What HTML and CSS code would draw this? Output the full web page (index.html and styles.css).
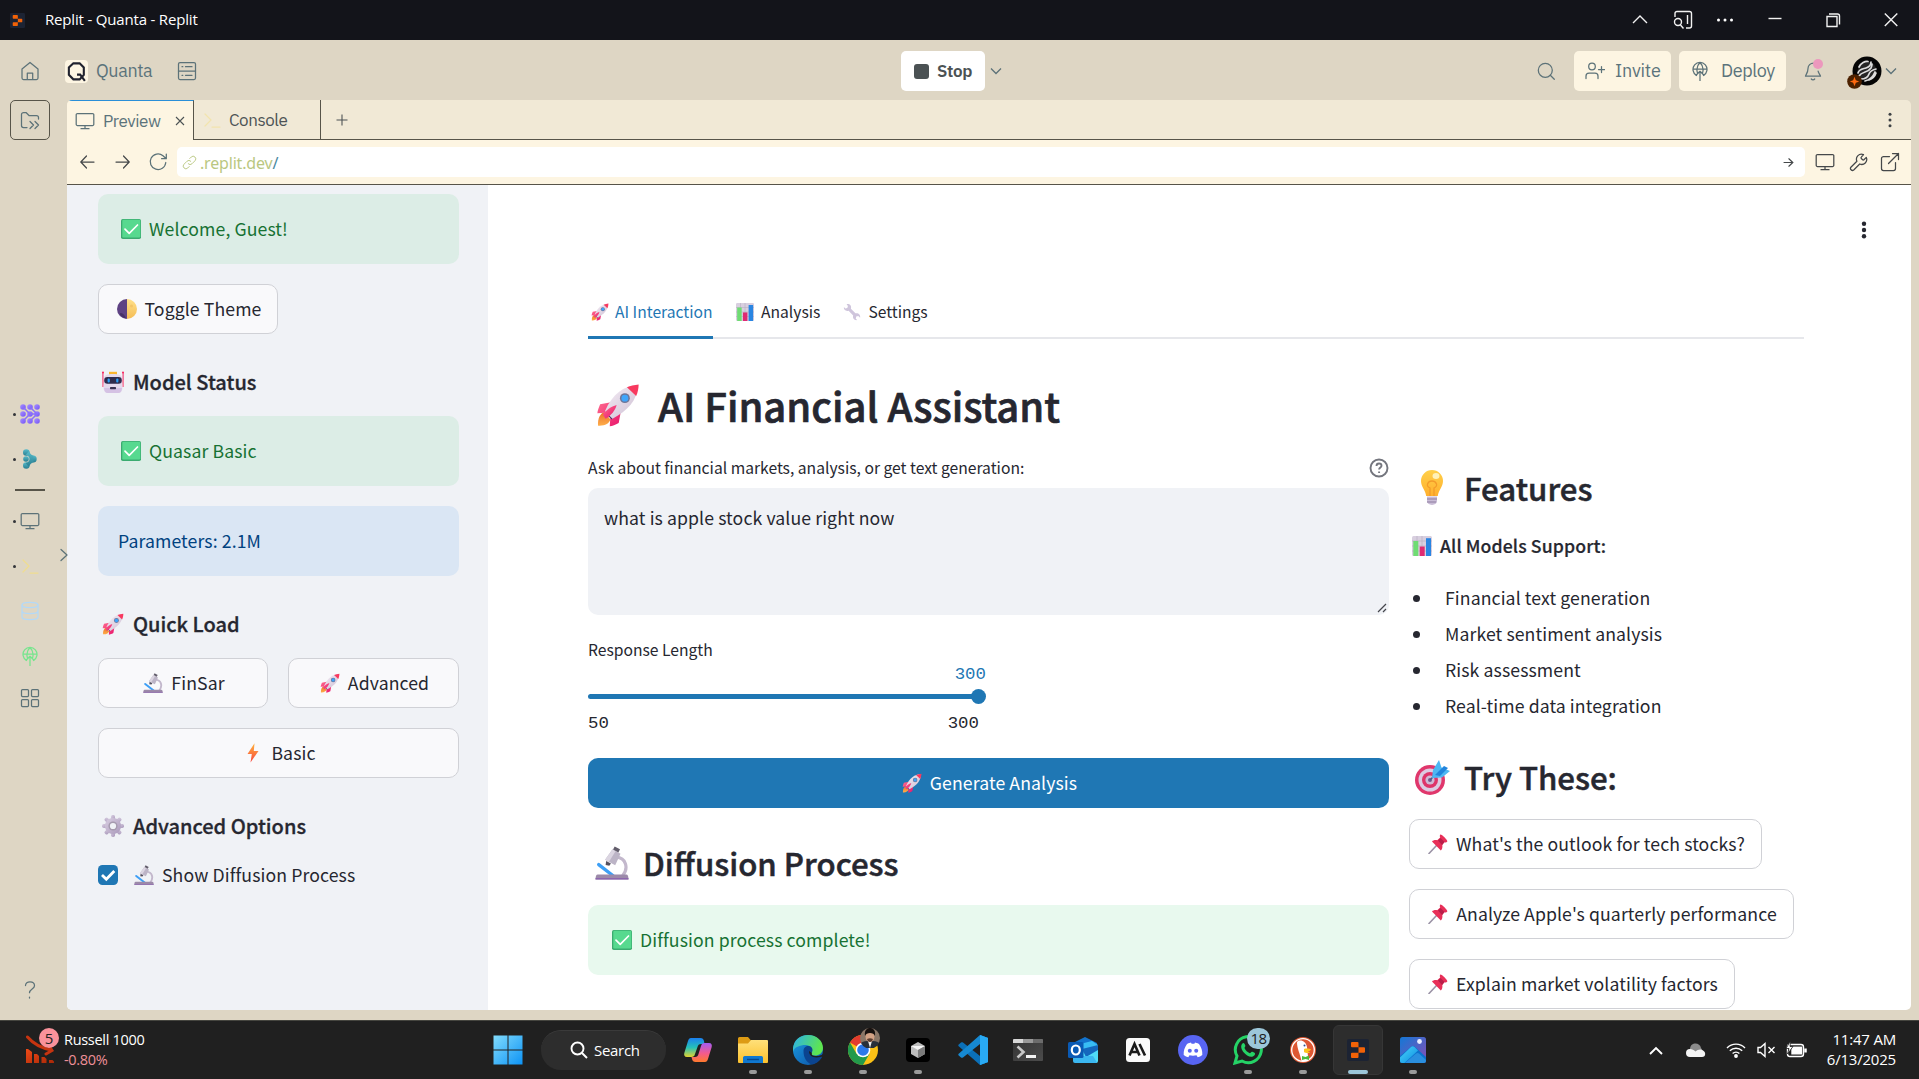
FILE: index.html
```html
<!DOCTYPE html>
<html lang="en">
<head>
<meta charset="utf-8">
<title>Replit - Quanta - Replit</title>
<link rel="stylesheet" href="styles.css">
</head>
<body>
<svg class="sprite" aria-hidden="true">
  <defs>
    <linearGradient id="gBody" x1="0" y1="0" x2="1" y2="1"><stop offset="0" stop-color="#f6eef6"/><stop offset="1" stop-color="#cdbfd3"/></linearGradient>
    <linearGradient id="gFin" x1="0" y1="0" x2="1" y2="1"><stop offset="0" stop-color="#ff6a8e"/><stop offset="1" stop-color="#e8156b"/></linearGradient>
    <linearGradient id="gFire" x1="0" y1="0" x2="0" y2="1"><stop offset="0" stop-color="#e8702a"/><stop offset="1" stop-color="#ffae4a"/></linearGradient>
    <linearGradient id="gBolt" x1="0" y1="0" x2="0" y2="1"><stop offset="0" stop-color="#ffb43c"/><stop offset="1" stop-color="#f7453f"/></linearGradient>
    <linearGradient id="gGear" x1="0" y1="0" x2="1" y2="1"><stop offset="0" stop-color="#d9cfe2"/><stop offset="1" stop-color="#a998ba"/></linearGradient>
    <linearGradient id="gMoon" x1="0" y1="0" x2="0" y2="1"><stop offset="0" stop-color="#ffe08a"/><stop offset="1" stop-color="#f5bd55"/></linearGradient>
    <linearGradient id="gBulb" x1="0" y1="0" x2="0" y2="1"><stop offset="0" stop-color="#ffd04a"/><stop offset="1" stop-color="#ffb02e"/></linearGradient>
    <linearGradient id="gPurple" x1="0" y1="0" x2="1" y2="1"><stop offset="0" stop-color="#a892ff"/><stop offset="1" stop-color="#7352f5"/></linearGradient>
    <linearGradient id="gTeal" x1="0" y1="0" x2="0" y2="1"><stop offset="0" stop-color="#58bccb"/><stop offset="1" stop-color="#287d90"/></linearGradient>
    <linearGradient id="gWin" x1="0" y1="0" x2="1" y2="1"><stop offset="0" stop-color="#82dcfc"/><stop offset="1" stop-color="#0d93f5"/></linearGradient>
    <linearGradient id="gCopA" x1="0" y1="0" x2="0" y2="1"><stop offset="0" stop-color="#1b7ff0"/><stop offset=".5" stop-color="#25c1b8"/><stop offset="1" stop-color="#e4d32e"/></linearGradient>
    <linearGradient id="gCopB" x1="0" y1="0" x2="0" y2="1"><stop offset="0" stop-color="#a35cf2"/><stop offset=".55" stop-color="#f45b8c"/><stop offset="1" stop-color="#ff7a2c"/></linearGradient>
    <linearGradient id="gFold" x1="0" y1="0" x2="0" y2="1"><stop offset="0" stop-color="#ffe07a"/><stop offset="1" stop-color="#fcc12d"/></linearGradient>
    <linearGradient id="gEdgeA" x1="0" y1="0" x2="1" y2=".3"><stop offset="0" stop-color="#2bb1ec"/><stop offset="1" stop-color="#5ee64f"/></linearGradient>
    <linearGradient id="gEdgeB" x1="0" y1="0" x2="1" y2="1"><stop offset="0" stop-color="#1b9de2"/><stop offset="1" stop-color="#0c50a4"/></linearGradient>
    <linearGradient id="gTerm" x1="0" y1="0" x2="1" y2="1"><stop offset="0" stop-color="#333"/><stop offset="1" stop-color="#4c4c4c"/></linearGradient>
    <linearGradient id="gPhoto" x1="0" y1="0" x2="1" y2="1"><stop offset="0" stop-color="#1378d6"/><stop offset="1" stop-color="#8a4db4"/></linearGradient>
    <linearGradient id="gHill" x1="0" y1="0" x2="1" y2="1"><stop offset="0" stop-color="#4ad4fa"/><stop offset="1" stop-color="#0b8ce0"/></linearGradient>
    <linearGradient id="gTrend" x1="0" y1="0" x2="1" y2="1"><stop offset="0" stop-color="#ef4a17"/><stop offset="1" stop-color="#a92807"/></linearGradient>
  </defs>

  <symbol id="rocket" viewBox="0 0 32 32">
    <path d="M6 21c-3 1-5 5-4.500 10 5 .3 8-1.500 9-4.500z" fill="url(#gFire)"/>
    <path d="M11 14l-8 1.500c-1 2.500-1.800 4.500-2 6.500l8-.5zM18 21l-1.500 8c-2.500 1.500-4.500 2-6.500 2.500l.5-8z" fill="url(#gFin)"/>
    <path d="M9 20l4 4-1.500 2.500-5-4.500z" fill="#433b6b"/>
    <path d="M30.500 1.500C20 2 12 8 6.500 20.500L12 26C23 20 30 13 30.500 1.500z" fill="url(#gBody)"/>
    <path d="M22.500 3c2.500-1 5.500-1.700 8.500-2 0 3-.7 6-1.800 8.500z" fill="#f8395f"/>
    <circle cx="21" cy="11" r="3.600" fill="#6d7598"/><circle cx="21" cy="11" r="2.500" fill="#3fa5fb"/>
    <path d="M5 23c2-3 6-6 10-7-1 4-4 7.500-8 10z" fill="url(#gFin)"/>
  </symbol>
  <symbol id="check" viewBox="0 0 20 20">
    <rect width="20" height="20" rx="1.800" fill="#3bab70"/><rect x="1.300" y=".8" width="18" height="17.600" rx="1.200" fill="#57d98f"/>
    <path d="M4 10.200l4.200 4.200L16.500 6" fill="none" stroke="#fff" stroke-width="1.700" stroke-linecap="round" stroke-linejoin="round"/>
  </symbol>
  <symbol id="moon" viewBox="0 0 20 20">
    <path d="M10 0a10 10 0 000 20z" fill="#5e4283"/><path d="M10 0a10 10 0 010 20z" fill="url(#gMoon)"/>
    <path d="M3 14c3 0 5 2 6 5.600-2.500-.6-4.600-2-6-4z" fill="#463066"/><circle cx="14.500" cy="7" r="1.500" fill="#f3c567"/>
  </symbol>
  <symbol id="robot" viewBox="0 0 22 22">
    <path d="M.9 1v15M21.100 1v15" stroke="#f0467c" stroke-width="1.200"/><path d="M.2 9h3v7h-3zM18.800 9h3v7h-3z" fill="#f58aa6"/>
    <circle cx="1" cy="1.500" r="1" fill="#f8265f"/><circle cx="21" cy="1.500" r="1" fill="#f8265f"/>
    <path d="M7 .8h8V5H7z" fill="#fbb62f"/>
    <path d="M2.200 7c0-3 3-4 8.800-4s8.800 1 8.800 4l.7 9c0 4-1.500 6-4 6H5.500c-2.500 0-4-2-4-6z" fill="#e4d9ec"/>
    <path d="M2 17h18c-.2 3-1.500 5-4 5H6c-2.500 0-3.800-2-4-5z" fill="#d5c2e4"/>
    <rect x="2.200" y="6" width="17.600" height="6.800" rx="3.200" fill="#2e2b4c"/>
    <rect x="5.600" y="7.400" width="2.200" height="4" rx="1" fill="#2b9df4"/><rect x="14.200" y="7.400" width="2.200" height="4" rx="1" fill="#2b9df4"/>
    <rect x="8" y="16" width="6" height="2.200" rx=".6" fill="#3b3352"/>
  </symbol>
  <symbol id="scope" viewBox="0 0 32 32">
    <path d="M20 10.500c9 .5 12 10 6 17.500" fill="none" stroke="#c3b8cc" stroke-width="3"/>
    <path d="M3.500 17.500L17 28" stroke="#3d9ff6" stroke-width="3.200" stroke-linecap="round"/>
    <path d="M16.500 3l7.500 4.300-5 10.700-9.500-5z" fill="#bcb4c6"/><path d="M16.500 3l3 1.600L13 15l-3.500-2z" fill="#dbd5e1"/>
    <path d="M18.500.5l5 2.500-1.500 3-5-2.800z" fill="#625d6b"/><path d="M10.500 14l4.500 2.500-1.500 2-3.500-.7z" fill="#55505f"/>
    <path d="M2.500 26.800h27c1.300 0 2 1.500 2 4.700H.5c0-3.200.7-4.700 2-4.700z" fill="#9c8aa9"/><path d="M.5 30.200h31v1.300H.5z" fill="#8c66ad"/>
  </symbol>
  <symbol id="bolt" viewBox="0 0 20 20"><path d="M11.500.3L4.500 11h4.300L7.500 19.500 15.500 8h-4.700z" fill="url(#gBolt)"/></symbol>
  <symbol id="gear" viewBox="0 0 24 24">
    <g fill="url(#gGear)"><rect x="9.800" y="0" width="4.400" height="7" rx="1.800"/><rect x="9.800" y="17" width="4.400" height="7" rx="1.800"/><rect x="0" y="9.800" width="7" height="4.400" rx="1.800"/><rect x="17" y="9.800" width="7" height="4.400" rx="1.800"/><g transform="rotate(45 12 12)"><rect x="9.800" y="0" width="4.400" height="7" rx="1.800"/><rect x="9.800" y="17" width="4.400" height="7" rx="1.800"/><rect x="0" y="9.800" width="7" height="4.400" rx="1.800"/><rect x="17" y="9.800" width="7" height="4.400" rx="1.800"/></g><circle cx="12" cy="12" r="8.800"/></g>
    <circle cx="12" cy="12" r="5" fill="#a59aae"/><circle cx="12" cy="12" r="3.400" fill="#f0f2f6"/>
  </symbol>
  <symbol id="chart" viewBox="0 0 20 20">
    <rect width="20" height="20" rx="1.500" fill="#d8cfdf"/><path d="M0 5h20M0 10h20M0 15h20M5 0v20M10 0v20" stroke="#b5abc1" stroke-width=".6"/>
    <path d="M1.300 5h5v15h-5z" fill="#6fdc73"/><path d="M7.700 10.500h5V20h-5z" fill="#de2a72"/><path d="M14 2.200h5V20h-5z" fill="#2985e2"/>
  </symbol>
  <symbol id="spanner" viewBox="0 0 20 20"><path d="M1 4.500L2.500 6l2.300-.5.700-2.300L4 1.300c3-1 5.800 1.500 4.800 5l5 5.200c3-1 6 1.500 5.200 5L17 14.500l-2.300.6-.5 2.300 1.600 1.600c-3 .8-5.500-1.800-4.500-5L6.200 8.600C3 9.500.4 7.300 1 4.500z" fill="#cfc5dc"/></symbol>
  <symbol id="bulb" viewBox="0 0 22 35">
    <path d="M11 0a11 11 0 00-11 11c0 6 4.500 9 5.200 15h11.600C17.500 20 22 17 22 11A11 11 0 0011 0z" fill="url(#gBulb)"/>
    <path d="M9 26V18c-5-2-2-7 2-7s7 5 2 7v8" fill="none" stroke="#f39b2a" stroke-width="1.300"/><ellipse cx="15" cy="6" rx="3.500" ry="3" fill="#fff1b8"/>
    <path d="M6 26.500h10v5c0 2-2 3-5 3.500-3-.5-5-1.500-5-3.500z" fill="#c9bcd6"/><path d="M6 29h10M6 32h9" stroke="#8d7ca0" stroke-width="1"/>
  </symbol>
  <symbol id="target" viewBox="0 0 35 35">
    <circle cx="15" cy="20" r="15" fill="#e0376c"/><circle cx="15" cy="20" r="11.500" fill="#dccbe2"/><circle cx="15" cy="20" r="8" fill="#de3469"/><circle cx="15" cy="20" r="4.600" fill="#cdb9d5"/><circle cx="15" cy="20" r="2" fill="#765c8b"/>
    <path d="M15 20l8-8" stroke="#4a5b8b" stroke-width="1.500"/><path d="M17 18l1-8 6-10 2.500 7.500L35 11l-8 6.500z" fill="#4db7f3"/><path d="M20 15L29 6l4 2-8 8z" fill="#2185dd"/>
  </symbol>
  <symbol id="pin" viewBox="0 0 20 20">
    <path d="M1 19.500l7.500-8" stroke="#9b93a6" stroke-width="1.600" stroke-linecap="round"/>
    <path d="M12.300.6c1-.8 7.700 5.700 7 7-.8 1.200-2.200 1-3 .7l-2 2.800c.4 2.500-.3 4.500-1.500 5.400L4 7.500c1-1.300 3.200-1.800 5.200-1.300l3-2.600c-.6-1.200-.5-2.300.1-3z" fill="#e82f58"/><path d="M12.500 4l4 4-2.500 3-4-4.500z" fill="#b91f4a"/>
  </symbol>
  <symbol id="monitor" viewBox="0 0 20 20"><path d="M2.500 2.500h15a1.300 1.300 0 011.300 1.300v9.400a1.300 1.300 0 01-1.300 1.300h-15a1.300 1.300 0 01-1.300-1.300V3.800a1.300 1.300 0 011.300-1.300zM10 14.500v3M6 17.700h8"/></symbol>
  <symbol id="prompt" viewBox="0 0 20 20"><path d="M3 4l6 6-6 6M10 17h8"/></symbol>
  <symbol id="globe" viewBox="0 0 20 20"><path d="M6.500 14.500a7 7 0 117 0M10 1.500C6.500 5 6.500 9 7.500 12M10 1.500c3.500 3.500 3.500 7.500 2.500 10.500M3 8h14M10 20v-9.500M6 14.300l4-4 4 4"/></symbol>
  <symbol id="chev" viewBox="0 0 12 12"><path d="M1 3.500l5 5 5-5"/></symbol>
  <symbol id="replit" viewBox="0 0 22 22"><rect width="22" height="22" rx="2" fill="#1c2333"/><path d="M5 3h5.500a1 1 0 011 1v4.300H5a1 1 0 01-1-1V4a1 1 0 011-1zM11.500 8.300H17a1 1 0 011 1v3.400a1 1 0 01-1 1h-5.500zM5 13.700h6.500V18a1 1 0 01-1 1H5a1 1 0 01-1-1v-3.300a1 1 0 011-1z" fill="#f26207"/></symbol>
</svg>

<div class="screen">
  <header class="titlebar">
    <svg class="app-mark"><use href="#replit"/></svg>
    <span class="title">Replit - Quanta - Replit</span>
    <div class="win-controls">
      <svg class="wc" viewBox="0 0 20 20"><path d="M3 13l7-7 7 7"/></svg>
      <svg class="wc" viewBox="0 0 20 20"><path d="M2 7V3.500A2 2 0 014 1.500h12.500a2 2 0 012 2V16a2 2 0 01-2 2H13M14.500 5v9"/><circle cx="5" cy="12" r="3.500"/><path d="M7.500 15l3 3.500"/></svg>
      <svg class="wc dots" viewBox="0 0 20 20"><circle cx="3.500" cy="10" r="1.500"/><circle cx="10" cy="10" r="1.500"/><circle cx="16.500" cy="10" r="1.500"/></svg>
      <svg class="wc min" viewBox="0 0 20 20"><path d="M3.500 8.500h13"/></svg>
      <svg class="wc" viewBox="0 0 20 20"><path d="M4 6.500h10v10H4zM6 4h8.500a2 2 0 012 2v8.500"/></svg>
      <svg class="wc" viewBox="0 0 20 20"><path d="M3.800 3.500l12.500 12.500M16.300 3.500L3.800 16"/></svg>
    </div>
  </header>

  <div class="topbar">
    <div class="top-left">
      <svg class="ic" viewBox="0 0 20 20"><path d="M2 8l8-6.500L18 8v9a1.500 1.500 0 01-1.500 1.500h-13A1.500 1.500 0 012 17zM7.300 18.500V12h5.400v6.500"/></svg>
      <span class="q-logo"><svg viewBox="0 0 22 22"><path d="M8 3.200h6l4 4v7L14 18.500H8l-4.300-4.300v-7z"/><path d="M11.500 14h3l4.500 6"/></svg></span>
      <span class="project">Quanta</span>
      <svg class="ic server" viewBox="0 0 20 20"><rect x="1.500" y="1.500" width="17" height="17" rx="1.500"/><path d="M1.500 10h17M5 5.700h.8M8.500 5.700H15M5 14.300h.8M8.500 14.300H15"/></svg>
    </div>
    <div class="top-mid">
      <button class="stop"><i></i>Stop</button>
      <svg class="chev"><use href="#chev"/></svg>
    </div>
    <div class="top-right">
      <svg class="ic find" viewBox="0 0 20 20"><circle cx="9.300" cy="9.300" r="7"/><path d="M14.300 14.300l4 4"/></svg>
      <button class="pill invite"><svg class="ic" viewBox="0 0 20 20"><circle cx="7" cy="5.500" r="3.300"/><path d="M1 17.500V15a3 3 0 013-3h6a3 3 0 013 3v2.500M16.500 5.500v6M13.500 8.500h6"/></svg>Invite</button>
      <button class="pill deploy"><svg class="ic"><use href="#globe"/></svg>Deploy</button>
      <span class="bell"><svg class="ic" viewBox="0 0 20 20"><path d="M10.500 2A5.500 5.500 0 005 7.500C5 12 2.500 14 2.500 15.200h15c0-1.200-2-2.700-2.400-5M8.300 18c.8 1 2.600 1 3.400 0"/></svg><i></i></span>
      <span class="avatar"><svg viewBox="0 0 30 30"><circle cx="15" cy="15" r="14.500" fill="#050505"/><circle cx="15" cy="15" r="9.500" fill="#252525"/><g fill="none" stroke="#dcdcdc" stroke-width="1.700" stroke-linecap="round"><path d="M6 17c1-4 5-4 8-5s5-3 5-6M7 20c3-5 9-3 12-8 1-2 1-3 1-4M9 23c4 0 7-2 8-5s3-4 7-5M13 25c5-1 8-4 10-9M7 11c2-4 6-6 9-5.500M17 24c3-1 6-4 7-7"/></g></svg><svg class="plus" viewBox="0 0 16 16"><circle cx="8" cy="8" r="7.800" fill="#4c2100"/><path d="M8 3l1.400 3.600L13 8 9.400 9.400 8 13 6.600 9.400 3 8l3.600-1.400z" fill="#ff6a10"/></svg></span>
      <svg class="chev"><use href="#chev"/></svg>
    </div>
  </div>

  <div class="body">
    <nav class="rail">
      <button class="files"><svg class="ic" viewBox="0 0 20 20"><path d="M7 17.500H3.500a2 2 0 01-2-2v-11a2 2 0 012-2H6l3 3h7.500a2 2 0 012 2V9M10 11.500l3.500 3.500-3.500 3.500M15 11.500l3.500 3.500-3.500 3.500"/></svg></button>
      <div class="dock">
        <span class="slot on"><svg class="blob" viewBox="0 0 20 20" fill="url(#gPurple)"><circle cx="3" cy="3" r="2.800"/><circle cx="10" cy="3" r="2.800"/><circle cx="17" cy="3" r="2.800"/><circle cx="3" cy="10" r="2.800"/><circle cx="10" cy="10" r="2.800"/><circle cx="17" cy="10" r="2.800"/><circle cx="3" cy="17" r="2.800"/><circle cx="10" cy="17" r="2.800"/><circle cx="17" cy="17" r="2.800"/><path d="M3 3l7 7M10 3l7 7M10 10h7M3 17l7-7M10 17l7-7" stroke="#8a70fb" stroke-width="1.500"/></svg></span>
        <span class="slot on"><svg class="blob" viewBox="0 0 20 20" fill="url(#gTeal)"><circle cx="6.300" cy="3.500" r="3.300"/><circle cx="6" cy="10" r="2.800"/><circle cx="13.200" cy="10" r="3.500"/><circle cx="6.300" cy="16.500" r="3.300"/><path d="M9 2c1 2.500 2 4 4.500 4.700v6.500c-2.500.8-3.500 2.300-4.500 4.800l-3.500-4c5.500-1 5.500-7 0-8z"/></svg></span>
        <span class="divider"></span>
        <span class="slot on"><svg class="ic"><use href="#monitor"/></svg></span>
        <span class="slot on"><svg class="ic yellow" viewBox="0 0 20 20"><use href="#prompt"/></svg></span>
        <span class="slot"><svg class="ic lightblue" viewBox="0 0 20 20"><ellipse cx="10" cy="4" rx="8" ry="2.600"/><path d="M2 4v12c0 1.500 3.500 2.600 8 2.600s8-1.100 8-2.600V4M2 10c0 1.500 3.500 2.600 8 2.600s8-1.100 8-2.600"/></svg></span>
        <span class="slot"><svg class="ic green"><use href="#globe"/></svg></span>
        <span class="slot last"><svg class="ic" viewBox="0 0 20 20"><rect x="1.500" y="1.500" width="7" height="7" rx="1"/><rect x="11.500" y="1.500" width="7" height="7" rx="1"/><rect x="1.500" y="11.500" width="7" height="7" rx="1"/><rect x="11.500" y="11.500" width="7" height="7" rx="1"/></svg></span>
      </div>
      <svg class="ic help" viewBox="0 0 20 20"><path d="M5.500 5.500C5.500 3 7.500 1.800 10 1.800s4.500 1.500 4.500 3.900c0 3.300-5 3.200-5 7M9.500 17v1"/></svg>
      <svg class="ic expand" viewBox="0 0 8 14"><path d="M1 1.500L7 7l-6 5.500"/></svg>
    </nav>

    <section class="pane">
      <div class="tabs">
        <div class="tab active"><svg class="ic"><use href="#monitor"/></svg><span>Preview</span><svg class="close" viewBox="0 0 10 10"><path d="M1 1l8 8M9 1L1 9"/></svg></div>
        <div class="tab console"><svg class="ic pale"><use href="#prompt"/></svg><span>Console</span></div>
        <div class="tab-rest"><svg class="plus-ic" viewBox="0 0 12 12"><path d="M6 .5v11M.5 6h11"/></svg><svg class="kebab" viewBox="0 0 4 16"><circle cx="2" cy="2.200" r="1.500"/><circle cx="2" cy="8" r="1.500"/><circle cx="2" cy="13.800" r="1.500"/></svg></div>
      </div>
      <div class="urlbar">
        <svg class="ic dark" viewBox="0 0 20 20"><path d="M17 10H4M9.500 4L3.800 10l5.700 6"/></svg>
        <svg class="ic dark" viewBox="0 0 20 20"><path d="M3 10h13M10.500 4l5.700 6-5.700 6"/></svg>
        <svg class="ic" viewBox="0 0 20 20"><path d="M17.800 10.500A7.800 7.800 0 1115 3.700l3 2.800M18.300 2v4.700h-4.700"/></svg>
        <div class="url"><svg class="ic" viewBox="0 0 20 20"><path d="M8.300 11.700a3.500 3.500 0 005 0l4-4a3.500 3.500 0 00-5-5l-2 2M11.700 8.300a3.500 3.500 0 00-5 0l-4 4a3.500 3.500 0 005 5l2-2"/></svg><span class="host">.replit.dev</span><span class="slash">/</span><svg class="ic go" viewBox="0 0 20 20"><path d="M4 10h12M10.500 5l5.200 5-5.200 5"/></svg></div>
        <svg class="ic dark"><use href="#monitor"/></svg>
        <svg class="ic dark" viewBox="0 0 20 20"><path d="M13.300 5.200a.9.900 0 000 1.300l1.300 1.300a.9.900 0 001.300 0l2.400-2.400a5 5 0 01-6.600 6.600l-6 6a2 2 0 01-2.800-2.800l6-6a5 5 0 016.600-6.600z"/></svg>
        <svg class="ic dark" viewBox="0 0 20 20"><path d="M15.500 10.500v6a2 2 0 01-2 2h-10a2 2 0 01-2-2v-10a2 2 0 012-2h6M12.500 1.500h6v6M8.500 11.500l10-10"/></svg>
      </div>

      <div class="app">
        <aside class="side">
          <div class="alert ok"><svg class="e20"><use href="#check"/></svg>Welcome, Guest!</div>
          <button class="btn toggle"><svg class="e20"><use href="#moon"/></svg>Toggle Theme</button>
          <h3><svg class="e22"><use href="#robot"/></svg>Model Status</h3>
          <div class="alert ok"><svg class="e20"><use href="#check"/></svg>Quasar Basic</div>
          <div class="alert info">Parameters: 2.1M</div>
          <h3><svg class="e22"><use href="#rocket"/></svg>Quick Load</h3>
          <div class="pair">
            <button class="btn"><svg class="e20"><use href="#scope"/></svg>FinSar</button>
            <button class="btn"><svg class="e20"><use href="#rocket"/></svg>Advanced</button>
          </div>
          <button class="btn wide"><svg class="e20"><use href="#bolt"/></svg>Basic</button>
          <h3><svg class="e22"><use href="#gear"/></svg>Advanced Options</h3>
          <label class="opt"><svg class="box" viewBox="0 0 20 20"><rect width="20" height="20" rx="4.500" fill="#1f77b4"/><path d="M4 10l4.300 4.300L16.300 6" fill="none" stroke="#fff" stroke-width="2.800"/></svg><svg class="e20"><use href="#scope"/></svg>Show Diffusion Process</label>
        </aside>

        <main class="main">
          <svg class="menu" viewBox="0 0 6 18"><circle cx="3" cy="2.700" r="2.200"/><circle cx="3" cy="9" r="2.200"/><circle cx="3" cy="15.300" r="2.200"/></svg>
          <div class="st-tabs">
            <span class="st-tab sel"><svg class="e18"><use href="#rocket"/></svg>AI Interaction</span>
            <span class="st-tab"><svg class="e18"><use href="#chart"/></svg>Analysis</span>
            <span class="st-tab"><svg class="e18"><use href="#spanner"/></svg>Settings</span>
          </div>
          <h1><svg class="e44"><use href="#rocket"/></svg>AI Financial Assistant</h1>
          <div class="cols">
            <div class="left">
              <div class="label-row"><span>Ask about financial markets, analysis, or get text generation:</span><svg class="q" viewBox="0 0 20 20"><circle cx="10" cy="10" r="8.500"/><path d="M7.500 8c0-1.500 1-2.500 2.500-2.500s2.500 1 2.500 2.300c0 1.700-2.400 1.700-2.400 3.700M10.100 13.500v1.500"/></svg></div>
              <div class="area">what is apple stock value right now<svg class="grip" viewBox="0 0 10 10"><path d="M1 9l8-8M6 9l3-3"/></svg></div>
              <div class="label">Response Length</div>
              <div class="slider">
                <div class="val">300</div>
                <div class="track"><i></i></div>
                <div class="ends"><span>50</span><span>300</span></div>
              </div>
              <button class="primary"><svg class="e20"><use href="#rocket"/></svg>Generate Analysis</button>
              <h2 class="h-diff"><svg class="e34"><use href="#scope"/></svg>Diffusion Process</h2>
              <div class="alert done"><svg class="e20"><use href="#check"/></svg>Diffusion process complete!</div>
            </div>
            <div class="right">
              <h2 class="h-feat"><svg class="bulb"><use href="#bulb"/></svg>Features</h2>
              <p class="support"><svg class="e20"><use href="#chart"/></svg>All Models Support:</p>
              <ul><li>Financial text generation</li><li>Market sentiment analysis</li><li>Risk assessment</li><li>Real-time data integration</li></ul>
              <h2 class="h-try"><svg class="e35"><use href="#target"/></svg>Try These:</h2>
              <button class="btn try a"><svg class="e20"><use href="#pin"/></svg>What's the outlook for tech stocks?</button>
              <button class="btn try b"><svg class="e20"><use href="#pin"/></svg>Analyze Apple's quarterly performance</button>
              <button class="btn try c"><svg class="e20"><use href="#pin"/></svg>Explain market volatility factors</button>
            </div>
          </div>
        </main>
      </div>
    </section>
  </div>

  <footer class="taskbar">
    <div class="widget">
      <svg class="trend" viewBox="0 0 28 28" fill="url(#gTrend)"><path d="M0 14h2l4 3v11H0zM8 19h3l2 2v7H8zM15.500 22h3l2 2v4h-5zM23 25h3.500l1.500 1.500V28h-5z"/><path d="M1.500 2c6 7 13 11 24 13M20 19l6-3.500-3-5" fill="none" stroke="#c63410" stroke-width="3" stroke-linecap="round"/></svg>
      <b class="count">5</b>
      <div class="quote"><span>Russell 1000</span><span class="down">-0.80%</span></div>
    </div>
    <div class="apps">
      <span class="tk start"><svg viewBox="0 0 30 30"><path d="M.5.500h14v14H.500zM15.500.500h14v14h-14zM.500 15.500h14v14H.500zM15.500 15.500h14v14h-14z" fill="url(#gWin)"/></svg></span>
      <span class="search"><svg viewBox="0 0 18 18"><circle cx="7.500" cy="7.500" r="6"/><path d="M12 12l5 5"/></svg>Search</span>
      <span class="tk"><svg viewBox="0 0 30 30"><path d="M8 3h9.500c2 0 3 1 3.500 3l.5 3h-3.500c-2 0-3 1-3.500 3L12 19c-.6 2.300-1.500 3-3.500 3H4c-2.500 0-3.300-2-2.700-4L5 6c.6-2 1.500-3 3-3z" fill="url(#gCopA)"/><path d="M22 27h-9.500c-2 0-3-1-3.500-3l-.5-2H12c2 0 3-1 3.500-3L18 11c.6-2 1.500-3 3.500-3H26c2.500 0 3.300 2 2.700 4L25 24c-.6 2-1.500 3-3 3z" fill="url(#gCopB)"/></svg></span>
      <span class="tk run"><svg viewBox="0 0 30 30"><path d="M1.500 2H10l3 3.500V12H0V3.500A1.500 1.500 0 011.500 2z" fill="#dd9b14"/><path d="M0 8.500h10l3-3.500h16a1 1 0 011 1v21a1 1 0 01-1 1H1a1 1 0 01-1-1z" fill="url(#gFold)"/><path d="M5 28v-5.500A1.700 1.700 0 016.700 21h16.600a1.700 1.700 0 011.700 1.700V28z" fill="#1078d0"/><path d="M9 24.500h12" stroke="#07488e" stroke-width="1.400"/></svg></span>
      <span class="tk run"><svg viewBox="0 0 30 30"><circle cx="15" cy="15" r="15" fill="url(#gEdgeB)"/><path d="M0 13C1 5 7 0 15 0c9 0 15 6 15 13 0 5-4 7.500-8 7.500-3 0-4.500-1.200-3.500-2.500 2-4-1-8-6-8C7 10 1 12 0 17z" fill="url(#gEdgeA)"/><path d="M10.500 16c0-3 2-5 5-5 2.500 0 4 2 4 4 0 3-3 3.500-.5 5.500 3 1.500 7 1 9-.5l1 2c-1.500 3-5 6.500-9.500 7.500-5-1-9-6-9-13.500z" fill="#0b448f"/><path d="M16 16c0 5 4 7.500 11.500 6 1.500-.6 2-.3 1.500.6l2-.6v-4c-2 2.500-5 3.300-8.500 3-3-.2-4.500-1.300-3.500-3z" fill="#202020"/></svg></span>
      <span class="tk run chrome"><svg viewBox="0 0 30 30"><circle cx="15" cy="15" r="15" fill="#fbc116"/><path d="M15 15L2 7.500A15 15 0 0128 7.500H15z" fill="#e33b2e"/><path d="M2 7.500A15 15 0 0015 30l6.500-11.300L15 15 8.500 18.700z" fill="#229a4b"/><circle cx="15" cy="15" r="7.300" fill="#fff"/><circle cx="15" cy="15" r="5.800" fill="#2d79ea"/></svg><svg class="face" viewBox="0 0 20 20"><circle cx="10" cy="10" r="10" fill="#8a7768"/><path d="M1 15c3-3 15-3 18 0a10 10 0 01-18 0z" fill="#29303a"/><path d="M8 13h4l-2 7z" fill="#eee"/><ellipse cx="10" cy="8.500" rx="4.500" ry="5.500" fill="#d3a285"/><path d="M5 8C4 1 8 0 10 0s6 1 5 8c-1-4-9-4-10 0z" fill="#17110f"/><path d="M7 11c2-1 4-1 6 0-1 4-5 4-6 0z" fill="#5b3d30"/></svg></span>
      <span class="tk run"><svg viewBox="0 0 30 30"><rect x="3" y="3" width="24" height="24" rx="4" fill="#000"/><path d="M15 7l7 4v8l-7 4-7-4v-8z" fill="#bdbdbd"/><path d="M8 11l14 0-7 4z" fill="#f5f5f5"/><path d="M22 11v8l-7 4v-8z" fill="#7a7a7a"/></svg></span>
      <span class="tk"><svg viewBox="0 0 30 30"><path d="M22 0l8 3v24l-8 3L1 11.500c-1-.8-.9-1.500 0-2.300L3 7.500c.7-.5 1.500-.4 2 0L22 21z" fill="#0b70b8"/><path d="M22 30l8-3V3l-8-3L1 18.500c-1 .8-.9 1.500 0 2.300L3 22.500c.7.500 1.500.4 2 0L22 9z" fill="#1689d2"/><path d="M22 0l8 3v24l-8 3z" fill="#29aaf4"/></svg></span>
      <span class="tk"><svg viewBox="0 0 30 30"><path d="M1 4h28a1 1 0 011 1v20a1 1 0 01-1 1H1a1 1 0 01-1-1V5a1 1 0 011-1z" fill="url(#gTerm)"/><path d="M1 4h9v4H0V5a1 1 0 011-1z" fill="#d8d8d8"/><path d="M10 4h10v4H10z" fill="#999"/><path d="M20 4h9a1 1 0 011 1v3H20z" fill="#6c6c6c"/><path d="M4.500 11.500l6 5.500-6 5.500" fill="none" stroke="#c8c8c8" stroke-width="2.600"/><path d="M13 20h10v3H13z" fill="#f3f3f3"/></svg></span>
      <span class="tk"><svg viewBox="0 0 30 30"><path d="M5 8l12-6 12 6v8L5 18z" fill="#1373cc"/><path d="M12 9l12-3 6 4-14 9z" fill="#38bdf4"/><path d="M10 20l20-10v16a2 2 0 01-2 2H8z" fill="#4fdcf7"/><path d="M14 14l16-4v5L18 22z" fill="#1467bd"/><path d="M5 21h20l4 6.500-1 .5H7a2 2 0 01-2-2z" fill="#3bb7f0"/><rect y="7" width="15.500" height="16" rx="1.500" fill="#0a5ab4"/><ellipse cx="7.800" cy="15" rx="4" ry="4.500" fill="none" stroke="#fff" stroke-width="2.200"/></svg></span>
      <span class="tk"><svg viewBox="0 0 30 30"><rect x="3" y="3" width="24" height="24" rx="3.500" fill="#fafafa"/><path d="M6.500 20.500L11.500 9l5 11.500M8.500 17h6M16.500 9l5.500 11.500" fill="none" stroke="#1a1a1a" stroke-width="2.600"/></svg></span>
      <span class="tk"><svg viewBox="0 0 30 30"><circle cx="15" cy="15" r="15" fill="#5865f2"/><path d="M9 9c2-1 3-1.300 4-1.500l.6 1.200h2.800L17 7.500c1 .2 2 .5 4 1.500 2.500 3.500 3.500 7 3.300 11-1.500 1.200-3 2-4.600 2.300l-1.200-2c-2.300.6-4.700.6-7 0l-1.200 2C8.700 22 7.200 21.200 5.700 20 5.500 16 6.500 12.500 9 9z" fill="#fff"/><circle cx="11.800" cy="15.800" r="2" fill="#5865f2"/><circle cx="18.200" cy="15.800" r="2" fill="#5865f2"/></svg></span>
      <span class="tk run whats"><svg viewBox="0 0 30 30"><path d="M2 28l2-7A13 13 0 119 26z" fill="none" stroke="#25d366" stroke-width="3"/><path d="M9 9c1.500-2 2.500-1 3.300 1.500.4 1-.8 1.700-.8 2.500 1 2.500 3 4.300 5.300 5.200.9 0 1.400-1.600 2.300-1.400 3 1 3.800 1.700 2.200 3.700-3 3-8 0-10.500-3C8.500 14.500 7.300 11.500 9 9z" fill="#25d366"/></svg><b class="n18">18</b></span>
      <span class="tk run"><svg viewBox="0 0 30 30"><circle cx="15" cy="15" r="13" fill="#de5833"/><circle cx="15" cy="15" r="11.300" fill="none" stroke="#fff" stroke-width="1.300"/><path d="M9 7c3-3 9-1 10 5l.5 5 1 8.500c-2 1-5 1-7 .5C12 18 9 14 9 7z" fill="#fff"/><path d="M16 14c3-1 6 0 7 .3-.5 1.700-2.500 2-3.500 2.300 1 .4 2 .3 2.500.8-1.500 1-4.500.6-6-.4z" fill="#fdc21d"/><circle cx="16.500" cy="10.500" r="1" fill="#2d4f8e"/><path d="M14 21l3.500 1 3.500-1.500V25l-3.500-1L14 25z" fill="#4cba3c"/></svg></span>
      <span class="tk run active"><svg viewBox="-4 -4 30 30"><use href="#replit" width="22" height="22"/></svg></span>
      <span class="tk run"><svg viewBox="0 0 30 30"><rect x="2" y="2" width="26" height="26" rx="2.500" fill="url(#gPhoto)"/><path d="M2 21L13.500 11.500c1-.8 2-.8 3 0L28 22v3.500a2.500 2.500 0 01-2.500 2.500h-21A2.500 2.500 0 012 25.500z" fill="#0c72cd"/><path d="M2 22.500L13 12c1.200-1 2.300-1 3.500 0l3.500 3.500L6.500 28h-2A2.500 2.500 0 012 25.500z" fill="url(#gHill)"/><path d="M7 28l11-9.500c1-.8 2-.8 3 0l7 6.500c0 2-1 3-2.500 3z" fill="#2a8fdf"/><circle cx="21.500" cy="6.500" r="2.400" fill="#e9edff"/></svg></span>
    </div>
    <div class="tray">
      <svg class="tr chevup" viewBox="0 0 20 20"><path d="M4 14l6-6 6 6"/></svg>
      <svg class="tr cloud" viewBox="0 0 20 20"><path d="M4 9.500C4 5 7 3.500 9.500 3.500S14.500 5 15 8l3 5H2z" fill="#8c8c8c" stroke="none"/><path d="M4 17a4 4 0 010-8c2 0 4 1 5.500 2.500 2-2 5.500-3 7.500-1 3.500 2 2.500 6.500-1 6.500z" fill="#f4f4f4" stroke="none"/></svg>
      <svg class="tr wifi" viewBox="0 0 20 20"><path d="M1 8a12.500 12.500 0 0118 0M3.800 10.800a9 9 0 0112.400 0M6.600 13.600a5 5 0 016.800 0"/><circle cx="10" cy="16" r="1.200" fill="#fff"/></svg>
      <svg class="tr" viewBox="0 0 20 20"><path d="M2 7.500h2.500L9 3.500v13l-4.500-4H2zM12.500 7l6 6M18.500 7l-6 6"/></svg>
      <svg class="tr batt" viewBox="0 0 22 20"><rect x="2.500" y="4.500" width="16" height="12" rx="2.500"/><path d="M20.500 8.500v4" stroke-width="2.500"/><rect x="7" y="7.300" width="9.500" height="6.500" fill="#fff"/><path d="M5.500 1L1 8.500h3L2.500 14 8 6.500H5z" fill="#fff" stroke="#202020" stroke-width=".8"/></svg>
      <div class="clock"><span>11:47 AM</span><span>6/13/2025</span></div>
    </div>
  </footer>
</div>
</body>
</html>
```

FILE: styles.css
```css
* { box-sizing: border-box; }
body { margin: 0; }
.sprite { position: absolute; width: 0; height: 0; }
svg { display: block; flex: none; }
button { margin: 0; border: 0; padding: 0; font: inherit; letter-spacing: inherit; color: inherit; background: none; white-space: nowrap; }
h1, h2, h3, p, ul { margin: 0; padding: 0; }

.screen { width: 1919px; height: 1079px; overflow: hidden; display: flex; flex-direction: column; background: #ded6c4; font-family: "Noto Sans", sans-serif; white-space: nowrap; }

/* Window title bar */
.titlebar { height: 40px; flex: none; display: flex; align-items: center; background: #13141a; color: #fff; padding-left: 10px; }
.app-mark { width: 15px; height: 15px; }
.title { margin-left: 20px; padding-bottom: 2px; font: 15px/20px "Open Sans", sans-serif; letter-spacing: -0.18px; }
.win-controls { margin-left: auto; display: flex; padding-right: 18px; }
.wc { width: 20px; height: 20px; fill: none; stroke: #f2f2f2; stroke-width: 1.4; margin-left: 38px; }
.wc:nth-child(2), .wc:nth-child(3) { margin-left: 22.500px; }
.wc.dots { fill: #fff; stroke: none; }
.wc.min { margin-left: 30px; }

/* Workspace header */
.ic { width: 20px; height: 20px; fill: none; stroke: #5c7278; stroke-width: 1.25; stroke-linecap: round; stroke-linejoin: round; }
.chev { width: 12px; height: 12px; fill: none; stroke: #5c7278; stroke-width: 1.3; }
.topbar { height: 60px; flex: none; display: grid; grid-template-columns: 901px 1fr 400px; color: #5b737b; font: 18px/24px "IBM Plex Sans", "Noto Sans", sans-serif; }
.top-left, .top-mid, .top-right { display: flex; align-items: center; height: 62px; }
.top-left { padding-left: 20px; }
.q-logo { width: 23px; height: 23px; border-radius: 4px; background: #fdf5e2; margin-left: 25px; }
.q-logo svg { width: 23px; height: 23px; fill: none; stroke: #20222e; stroke-width: 2; }
.project { margin-left: 8px; width: 58px; letter-spacing: -0.4px; }
.server { margin-left: 23px; }
.stop { width: 84px; height: 40px; border-radius: 5px; background: #fff; color: #4b5254; display: flex; align-items: center; padding-left: 13px; font-weight: 600; font-size: 17px; letter-spacing: -0.3px; }
.stop i { width: 15px; height: 15px; border-radius: 3px; background: #4b5254; margin-right: 8px; }
.top-mid .chev { margin-left: 5px; }
.find { margin-right: 18px; }
.pill { height: 40px; border-radius: 5px; background: #fdf5e2; display: flex; align-items: center; padding-left: 11px; flex: none; }
.invite { width: 97px; margin-right: 8px; letter-spacing: -0.2px; }
.invite .ic { margin-right: 10px; }
.deploy { width: 107px; letter-spacing: -0.4px; }
.deploy .ic { margin-right: 11px; }
.bell { position: relative; margin-left: 17px; }
.bell i { position: absolute; left: 10px; top: -2px; width: 10px; height: 10px; border-radius: 50%; background: #ec98bd; }
.top-right { justify-content: flex-end; padding-right: 22px; }
.avatar { position: relative; width: 30px; height: 30px; margin-left: 29px; margin-right: 3px; }
.avatar > svg:first-child { width: 30px; height: 30px; }
.avatar .plus { position: absolute; left: -5px; top: 18px; width: 15px; height: 15px; }

/* Left rail */
.body { flex: none; height: 920px; display: flex; padding: 0 8px 10px 0; }
.rail { width: 67px; position: relative; display: flex; flex-direction: column; align-items: flex-start; }
.files { width: 40px; height: 40px; margin-left: 10px; border: 1px solid #575449; border-radius: 5px; display: grid; place-items: center; }
.dock { margin-top: 251.500px; width: 60px; display: flex; flex-direction: column; align-items: center; }
.slot { height: 45px; width: 60px; display: grid; place-items: center; position: relative; }
.slot.last { height: 39px; }
.slot.on::before { content: ""; position: absolute; left: 13px; top: 21px; width: 3px; height: 3px; border-radius: 50%; background: #33353a; }
.blob { width: 20px; height: 20px; }
.divider { width: 30px; height: 2px; background: #575449; margin: 7.500px 0; }
.yellow { stroke: #efdd90; }
.lightblue { stroke: #b3d9f8; }
.green { stroke: #76e58d; }
.help { margin: auto 0 10px 20px; }
.expand { position: absolute; left: 60px; top: 448px; width: 8px; height: 14px; }

/* Pane chrome */
.pane { width: 1844px; display: flex; flex-direction: column; border-radius: 5px; overflow: hidden; }
.tabs { height: 40px; flex: none; display: flex; background: #f1e9d6; font: 17px/24px "IBM Plex Sans", "Noto Sans", sans-serif; }
.tab { width: 127px; display: flex; align-items: center; color: #4d5355; border-right: 1px solid #575449; border-bottom: 1px solid #575449; }
.tab.active { background: #fdf5e2; color: #5b737b; border-top: 1px solid #2a8fd8; border-bottom: 0; padding-left: 8px; letter-spacing: -0.4px; }
.tab.active span { margin-left: 8px; width: 57px; }
.close { width: 10px; height: 10px; fill: none; stroke: #4d5355; stroke-width: 1.1; margin-left: 15px; }
.tab.console { padding-left: 8px; }
.tab.console span { margin-left: 7px; letter-spacing: -0.45px; }
.pale { stroke: #f2e4ae; }
.tab-rest { flex: 1; border-bottom: 1px solid #575449; display: flex; align-items: center; justify-content: space-between; padding: 0 19px 0 15px; }
.plus-ic { width: 12px; height: 12px; fill: none; stroke: #4d5355; stroke-width: 1.1; }
.kebab { width: 4px; height: 16px; fill: #3d4144; }
.urlbar { height: 45px; flex: none; background: #fdf5e2; border-bottom: 1px solid #575449; display: flex; align-items: center; padding-left: 10px; }
.urlbar > .ic { margin-right: 15.500px; }
.urlbar > .url { margin-left: -6.500px; }
.dark { stroke: #45484a; }
.url { width: 1628px; flex: none; height: 30px; border-radius: 5px; background: #fff; display: flex; align-items: center; padding: 0 9px 0 5px; font: 16px/24px "Noto Sans", sans-serif; margin-right: 10px; }
.url ~ .ic { margin-right: 12.500px; }
.url .ic { width: 15px; height: 15px; stroke: #bac781; }
.host, .slash { padding-top: 2px; }
.host { color: #bac781; margin-left: 3px; letter-spacing: -0.18px; }
.slash { color: #4989a0; }
.url .go { margin-left: auto; stroke: #45484a; stroke-width: 1.5; }

/* Streamlit app */
.app { flex: 1; display: flex; background: #fff; color: #262730; font: 17.660px/24px "Noto Sans CJK JP", sans-serif; letter-spacing: 0.095px; overflow: hidden; }
.e18 { width: 18px; height: 18px; }
.e20 { width: 20px; height: 20px; }
.e22 { width: 22px; height: 22px; }
.side { width: 421px; flex: none; background: #f0f2f6; padding: 9px 29px 0 31px; display: flex; flex-direction: column; align-items: stretch; }
.alert { height: 70px; flex: none; border-radius: 10px; display: flex; align-items: center; gap: 8px; padding-left: 23px; }
.alert.ok { background: #dcede6; color: #177233; }
.alert.info { background: #dae6f4; color: #004280; margin-top: 20px; padding-left: 20px; }
.btn { height: 50px; flex: none; border: 1px solid #d0d1d6; border-radius: 10px; background: #f9f9fb; display: flex; align-items: center; justify-content: center; gap: 8px; padding-left: 2px; }
.toggle { width: 180px; margin-top: 20px; }
.side h3 { height: 82px; padding: 14px 0 0 4px; font-size: 20px; letter-spacing: 0; font-weight: 500; -webkit-text-stroke: 0.3px #262730; display: flex; align-items: center; gap: 9px; }
.pair { display: grid; grid-template-columns: 170px 171px; gap: 20px; }
.wide { margin-top: 20px; }
.opt { margin-top: 5px; height: 20px; display: flex; align-items: center; gap: 8px; }
.opt .box { width: 20px; height: 20px; margin-right: 8px; }

.main { width: 1423px; flex: none; position: relative; padding: 102px 107px 0 100px; }
.menu { position: absolute; left: 1373px; top: 36px; width: 6px; height: 18px; fill: #262730; }
.st-tabs { height: 52px; border-bottom: 2px solid #e6e7eb; display: flex; gap: 20px; font-size: 15.650px; letter-spacing: 0; }
.st-tab { height: 52px; display: flex; align-items: center; gap: 7px; padding: 0 0 3px 3px; }
.st-tab.sel { width: 125px; gap: 6px; color: #1f77b4; border-bottom: 3px solid #1f77b4; padding-bottom: 0; }
h1 { height: 109px; padding-left: 7px; font-size: 40px; letter-spacing: 0; line-height: 50px; font-weight: 500; -webkit-text-stroke: 0.7px #262730; display: flex; align-items: center; gap: 17px; padding-top: 22px; }
.e44 { width: 46px; height: 44px; }
.cols { display: flex; gap: 20px; }
.left { width: 801px; flex: none; }
.label-row { font-size: 15.670px; letter-spacing: 0; margin-top: 7px; height: 33px; display: flex; align-items: flex-start; justify-content: space-between; }
.label-row span { padding-top: 1px; }
.q { width: 20px; height: 20px; fill: none; stroke: #74767e; stroke-width: 1.9; margin-top: 3px; }
.area { position: relative; height: 127px; background: #f0f2f6; border-radius: 10px; padding: 18px 16px; }
.grip { position: absolute; right: 2px; bottom: 2px; width: 10px; height: 10px; stroke: #44464c; stroke-width: 1.2; }
.label { font-size: 15.670px; letter-spacing: 0; line-height: 24px; margin-top: 23px; }
.slider { width: 391px; height: 96px; font: 17.400px/20px "Liberation Mono", monospace; letter-spacing: 0; }
.val { color: #1f77b4; text-align: right; padding-top: 3px; margin-right: -7px; height: 28px; }
.track { position: relative; height: 5px; background: #1f77b4; border-radius: 3px; margin-top: 4px; width: 390px; }
.track i { position: absolute; right: -7.500px; top: -5px; width: 15px; height: 15px; border-radius: 50%; background: #1f77b4; }
.ends { display: flex; justify-content: space-between; margin-top: 15px; }
.primary { width: 801px; height: 50px; border-radius: 10px; background: #1f77b4; color: #fff; display: flex; align-items: center; justify-content: center; gap: 8px; padding-left: 2px; }
h2 { font-size: 31.200px; letter-spacing: 0; line-height: 40px; font-weight: 500; -webkit-text-stroke: 0.5px #262730; display: flex; align-items: center; }
.h-diff { height: 97px; padding: 12px 0 0 7px; gap: 14px; }
.e34 { width: 34px; height: 34px; }
.done { background: #e8f9ee; color: #177233; padding-left: 24px; }
.right { width: 394px; }
.h-feat { height: 63px; padding: 16px 0 0 12px; gap: 21px; }
.bulb { width: 22px; height: 35px; }
.support { font-weight: 500; display: flex; align-items: center; gap: 8px; padding-left: 3px; height: 30px; margin-top: 20px; -webkit-text-stroke: 0.2px #262730; }
ul { list-style: none; margin-top: 19px; }
li { height: 36px; line-height: 36px; padding-left: 36px; position: relative; }
li::before { content: ""; position: absolute; left: 4px; top: 15px; width: 7px; height: 7px; border-radius: 50%; background: #262730; }
.h-try { height: 95px; padding: 11px 0 0 6px; gap: 14px; }
.e35 { width: 35px; height: 35px; }
.try { background: #fff; margin-bottom: 20px; }
.try.a { width: 353px; }
.try.b { width: 385px; }
.try.c { width: 326px; }

/* Taskbar */
.taskbar { height: 59px; flex: none; background: #202020; border-top: 1px solid #45453f; display: flex; position: relative; color: #fff; font: 15px/20px "Open Sans", sans-serif; }
.widget { width: 483px; position: relative; display: flex; padding: 9px 0 0 26px; }
.trend { width: 28px; height: 28px; margin-top: 5px; }
.count { position: absolute; left: 39px; top: 7px; width: 20px; height: 20px; border-radius: 50%; background: #f9929b; color: #222; font: 15px/20px "Open Sans", sans-serif; text-align: center; }
.quote { margin-left: 10px; display: flex; flex-direction: column; font-size: 14.500px; letter-spacing: -0.3px; }
.down { color: #ee8f98; }
.apps { display: flex; padding-top: 4px; }
.tk { position: relative; width: 50px; height: 50px; margin-right: 5px; display: grid; place-items: center; border-radius: 6px; }
.tk > svg:first-child { width: 30px; height: 30px; }
.tk.start { margin-right: 8px; }
.tk.run::after { content: ""; position: absolute; left: 21px; bottom: 1px; width: 8px; height: 4px; border-radius: 2px; background: #9a9a9a; }
.tk.active { background: #2d2d2d; border: 1px solid #363636; }
.tk.active::after { left: 14px; bottom: 0; width: 20px; background: #9cc6d9; }
.search { width: 125px; height: 40px; margin: 5px 7px 0 0; border-radius: 20px; background: #2d2d2d; border-top: 1px solid #3a3a3a; display: flex; align-items: center; padding: 0 0 2px 29px; gap: 6px; letter-spacing: -0.3px; }
.search svg { width: 18px; height: 18px; fill: none; stroke: #fff; stroke-width: 1.9; }
.face { position: absolute; left: 22px; top: 3px; width: 20px; height: 20px; }
.n18 { position: absolute; left: 24px; top: 3px; width: 23px; height: 21px; border-radius: 11px; background: #9cc6d9; color: #1c1c1c; font: 15px/21px "Open Sans", sans-serif; text-align: center; letter-spacing: -0.5px; }
.tray { margin-left: auto; display: flex; align-items: center; padding-right: 23px; }
.tr { width: 20px; height: 20px; fill: none; stroke: #fff; stroke-width: 1.4; margin-right: 9.500px; }
.chevup { margin-right: 20px; stroke-width: 1.9; }
.cloud { margin-right: 20px; }
.batt { width: 22px; margin-right: 11px; }
.clock { width: 78px; display: flex; flex-direction: column; align-items: flex-end; font-size: 15px; letter-spacing: -0.2px; padding-bottom: 2px; }
```
